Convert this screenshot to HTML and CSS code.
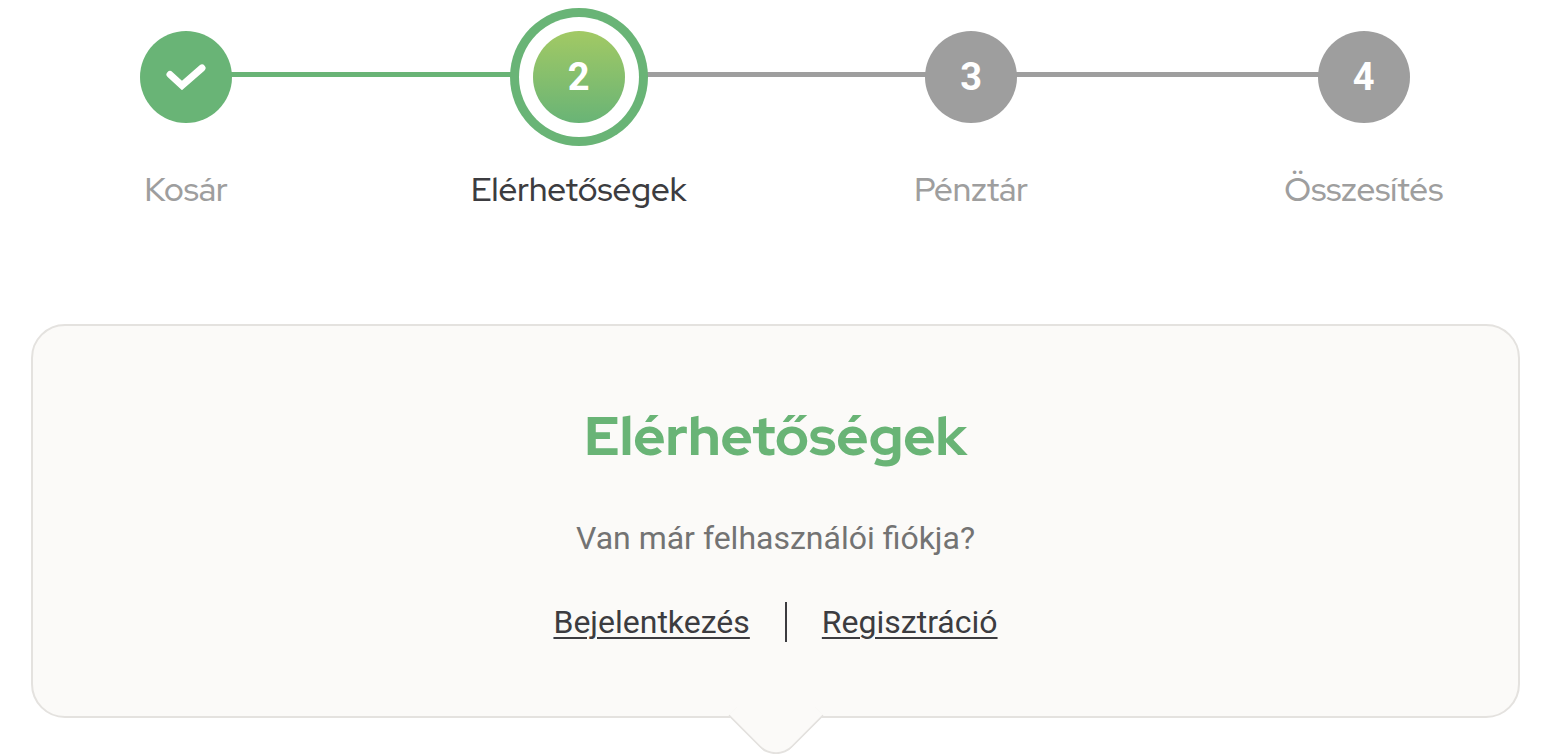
FILE: index.html
```html
<!DOCTYPE html>
<html lang="hu">
<head>
    <meta charset="utf-8">
    <title>Elérhetőségek</title>
    <meta name="viewport" content="width=device-width, initial-scale=1">
    <link rel="stylesheet" href="styles.css">
</head>
<body>
    <ol class="steps">
        <li class="step done">
            <span class="circle">
                <svg width="40" height="26" viewBox="0 0 40 26" fill="none" stroke="#fff" stroke-width="7" stroke-linecap="round" aria-hidden="true">
                    <path d="M4 10.500 L16 21.500 L36 4"/>
                </svg>
            </span>
            <span class="label">Kosár</span>
        </li>
        <li class="step active" aria-current="step">
            <span class="circle">2</span>
            <span class="label">Elérhetőségek</span>
        </li>
        <li class="step">
            <span class="circle">3</span>
            <span class="label">Pénztár</span>
        </li>
        <li class="step">
            <span class="circle">4</span>
            <span class="label">Összesítés</span>
        </li>
    </ol>
    <main class="panel">
        <h1>Elérhetőségek</h1>
        <p>Van már felhasználói fiókja?</p>
        <nav class="links">
            <a href="#">Bejelentkezés</a>
            <a href="#">Regisztráció</a>
        </nav>
    </main>
</body>
</html>
```
FILE: styles.css
```css
body {
    margin: 0;
    padding-bottom: 36px;
    background-color: #fff;
    color: #3c3c40;
    font-family: Roboto, sans-serif;
    font-size: 32px;
    line-height: 40px;
    overflow: hidden;
}

.steps {
    display: flex;
    margin: 0 -13px 0 -10px;
    padding: 31px 0 0;
    list-style: none;
}

.step {
    position: relative;
    flex: 1;
    display: flex;
    flex-direction: column;
    align-items: center;
    gap: 46px;
    color: #9e9e9e;
}

/* connector to the next step */
.step:not(:last-child)::after {
    content: "";
    position: absolute;
    top: 41px;
    left: 50%;
    width: 100%;
    height: 5px;
    background-color: #9e9e9e;
}

.step.done::after {
    background-color: #69b476 !important;
}

.circle {
    position: relative;
    z-index: 1;
    display: flex;
    align-items: center;
    justify-content: center;
    width: 92px;
    height: 92px;
    border-radius: 50%;
    background-color: #9e9e9e;
    color: #fff;
    font-size: 38px;
    font-weight: bold;
    line-height: 40px;
}

.done .circle {
    background-color: #69b476;
}

.active .circle {
    background-image: linear-gradient(#a2c964, #69b476);
    box-shadow: 0 0 0 14px #fff, 0 0 0 23px #69b476;
}

.label {
    font-family: "Red Hat Display", Lato, sans-serif;
    font-size: 33px;
    font-weight: 500;
}

.active .label {
    color: #3c3c40;
}

.panel {
    position: relative;
    margin: 115px 27px 0 31px;
    padding: 76px 32px 74px;
    border: 2px solid #e4e2df;
    border-radius: 34px;
    background-color: #fbfaf8;
    text-align: center;
}

/* pointer under the panel */
.panel::after {
    content: "";
    position: absolute;
    bottom: -34px;
    left: calc(50% - 34px);
    box-sizing: border-box;
    width: 68px;
    height: 68px;
    border: solid #e4e2df;
    border-width: 0 2px 2px 0;
    border-radius: 0 0 24px 0;
    background-color: #fbfaf8;
    transform: rotate(45deg);
}

h1 {
    margin: 0 0 48px;
    color: #69b476;
    font-family: "Red Hat Display", Lato, sans-serif;
    font-size: 55px;
    font-weight: 800;
    line-height: 68px;
}

p {
    margin: 0 0 44px;
    color: #737373;
}

.links {
    display: flex;
    justify-content: center;
}

.links a {
    color: #3c3c40;
    text-decoration-thickness: 2px;
    text-underline-offset: 4px;
}

.links a + a {
    margin-left: 35px;
    padding-left: 35px;
    border-left: 2px solid #3c3c40;
}
```
